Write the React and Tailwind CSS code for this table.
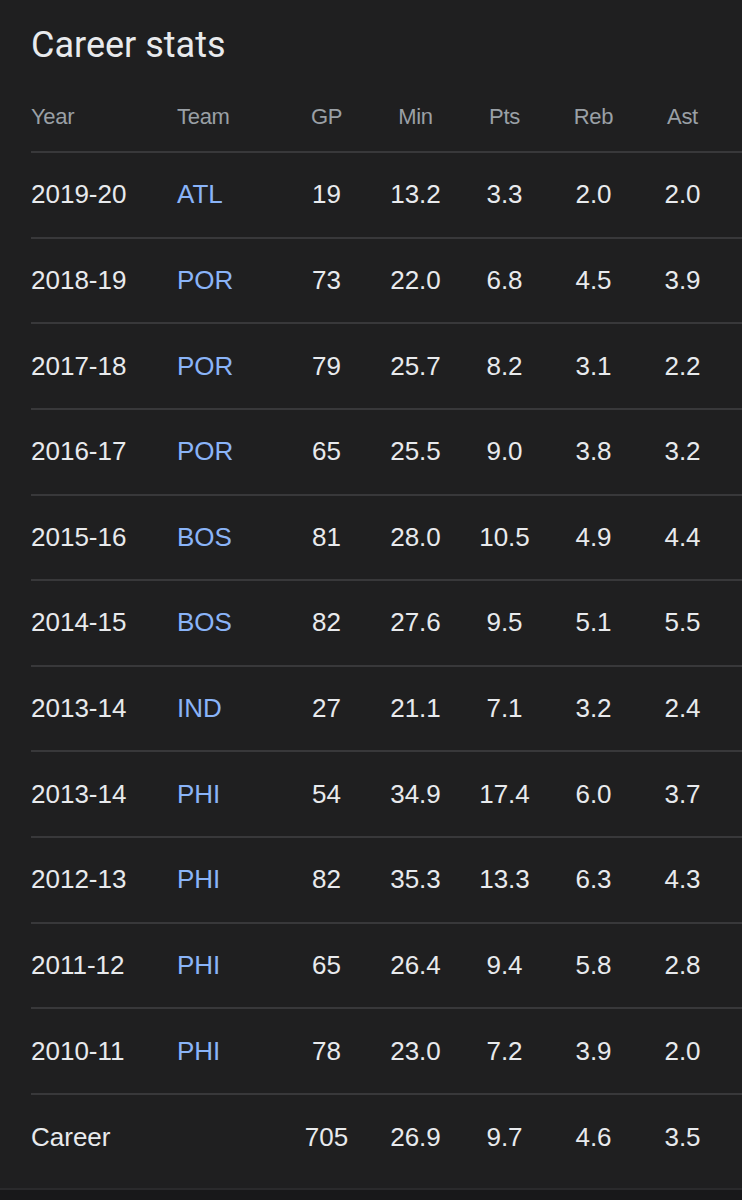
const seasons = [
  ['2019-20', 'ATL', '19', '13.2', '3.3', '2.0', '2.0'],
  ['2018-19', 'POR', '73', '22.0', '6.8', '4.5', '3.9'],
  ['2017-18', 'POR', '79', '25.7', '8.2', '3.1', '2.2'],
  ['2016-17', 'POR', '65', '25.5', '9.0', '3.8', '3.2'],
  ['2015-16', 'BOS', '81', '28.0', '10.5', '4.9', '4.4'],
  ['2014-15', 'BOS', '82', '27.6', '9.5', '5.1', '5.5'],
  ['2013-14', 'IND', '27', '21.1', '7.1', '3.2', '2.4'],
  ['2013-14', 'PHI', '54', '34.9', '17.4', '6.0', '3.7'],
  ['2012-13', 'PHI', '82', '35.3', '13.3', '6.3', '4.3'],
  ['2011-12', 'PHI', '65', '26.4', '9.4', '5.8', '2.8'],
  ['2010-11', 'PHI', '78', '23.0', '7.2', '3.9', '2.0'],
];

const cols = 'grid grid-cols-[146px_105px_89px_89px_89px_89px_89px] items-center';

const StatRow = ({ year, team, stats }) => (
  <div className={`${cols} h-[85.64px] border-t-2 border-[#38383a] text-[26px] text-[#e8eaed]`}>
    <span>{year}</span>
    <span className="text-[#8ab4f8]">{team}</span>
    {stats.map((s, i) => (
      <span key={i} className="text-center">{s}</span>
    ))}
  </div>
);

export default function App() {
  return (
    <div className="min-h-[1200px] bg-[#18181a] font-['Liberation_Sans',Arial,sans-serif]">
      <div className="bg-[#1f1f20] border-b-2 border-[#2a2a2c] pl-[31px] pb-[2px]">
        <div className="h-[81px] pt-[19px]">
          <h2 className="font-['Roboto',sans-serif] text-[36px] leading-[52px] text-[#e8eaed]">Career stats</h2>
        </div>
        <div className={`${cols} h-[70px] text-[22px] tracking-[-0.3px] text-[#9aa0a6]`}>
          <span>Year</span>
          <span>Team</span>
          <span className="text-center">GP</span>
          <span className="text-center">Min</span>
          <span className="text-center">Pts</span>
          <span className="text-center">Reb</span>
          <span className="text-center">Ast</span>
        </div>
        {seasons.map(([year, team, ...stats], i) => (
          <StatRow key={i} year={year} team={team} stats={stats} />
        ))}
        <div className={`${cols} h-[93px] pb-[6px] border-t-2 border-[#38383a] text-[26px] text-[#e8eaed]`}>
          <span>Career</span>
          <span></span>
          <span className="text-center">705</span>
          <span className="text-center">26.9</span>
          <span className="text-center">9.7</span>
          <span className="text-center">4.6</span>
          <span className="text-center">3.5</span>
        </div>
      </div>
    </div>
  );
}
